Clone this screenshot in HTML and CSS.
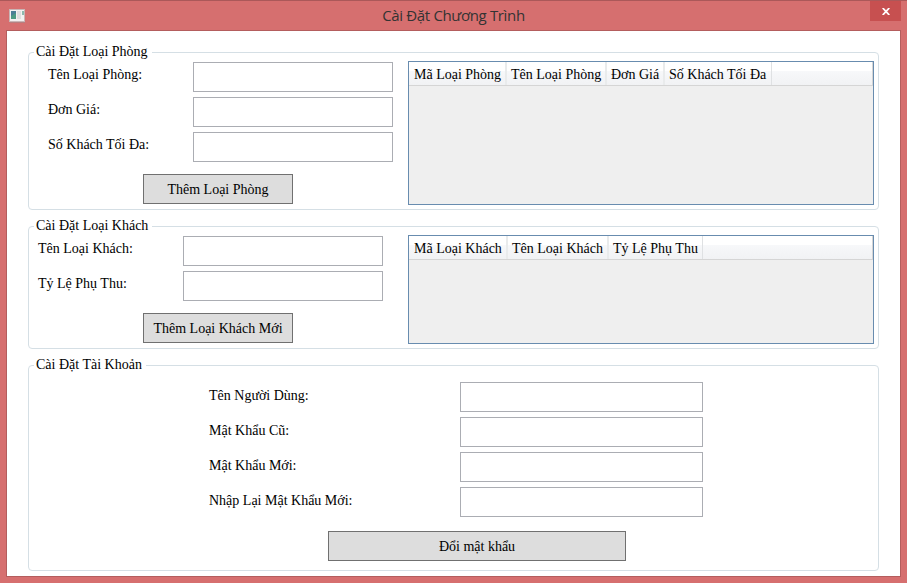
FILE: index.html
```html
<!DOCTYPE html>
<html lang="vi">
<head>
<meta charset="utf-8">
<title>Cài Đặt Chương Trình</title>
<link rel="stylesheet" href="styles.css">
</head>
<body>
<div class="window">
  <header class="titlebar">
    <svg class="app-icon" width="16" height="14" viewBox="0 0 16 14">
      <rect x=".5" y=".5" width="15" height="12" fill="#f3f1f1" stroke="#c9b5b5"/>
      <rect x="2" y="2" width="5" height="8" fill="#4b7f96"/>
      <path d="M2 10V7l5-3v6z" fill="#4d9b83"/>
      <rect x="8" y="2" width="4" height="8" fill="#dedede"/>
      <rect x="13" y="2" width="2" height="4" fill="#8db9ae"/>
      <path d="M1 13.5h15" stroke="#b77f80"/>
    </svg>
    <h1 class="title">Cài Đặt Chương Trình</h1>
    <button class="close" aria-label="Đóng">
      <svg width="8" height="7" viewBox="0 0 8 7"><path d="M.7 0 7.3 7M7.3 0 .7 7" stroke="#fff" stroke-width="1.8"/></svg>
    </button>
  </header>
  <main class="client">
    <fieldset class="group room">
      <legend>Cài Đặt Loại Phòng</legend>
      <div class="form">
        <div class="fields">
          <label for="r1">Tên Loại Phòng:</label><input id="r1">
          <label for="r2">Đơn Giá:</label><input id="r2">
          <label for="r3">Số Khách Tối Đa:</label><input id="r3">
        </div>
        <button class="btn">Thêm Loại Phòng</button>
      </div>
      <div class="list">
        <div class="head"><span class="c1">Mã Loại Phòng</span><span class="c2">Tên Loại Phòng</span><span class="c3">Đơn Giá</span><span class="c4">Số Khách Tối Đa</span></div>
      </div>
    </fieldset>
    <fieldset class="group guest">
      <legend>Cài Đặt Loại Khách</legend>
      <div class="form">
        <div class="fields">
          <label for="g1">Tên Loại Khách:</label><input id="g1">
          <label for="g2">Tỷ Lệ Phụ Thu:</label><input id="g2">
        </div>
        <button class="btn">Thêm Loại Khách Mới</button>
      </div>
      <div class="list">
        <div class="head"><span class="c1">Mã Loại Khách</span><span class="c2">Tên Loại Khách</span><span class="c3">Tỷ Lệ Phụ Thu</span></div>
      </div>
    </fieldset>
    <fieldset class="group account">
      <legend>Cài Đặt Tài Khoản</legend>
      <div class="form">
        <div class="fields">
          <label for="a1">Tên Người Dùng:</label><input id="a1">
          <label for="a2">Mật Khẩu Cũ:</label><input id="a2" type="password">
          <label for="a3">Mật Khẩu Mới:</label><input id="a3" type="password">
          <label for="a4">Nhập Lại Mật Khẩu Mới:</label><input id="a4" type="password">
        </div>
        <button class="btn">Đổi mật khẩu</button>
      </div>
    </fieldset>
  </main>
</div>
</body>
</html>
```
FILE: styles.css
```css
* { box-sizing: border-box; }
body { margin: 0; overflow: hidden; }
.window {
  width: 907px;
  height: 583px;
  padding: 0 6px 6px;
  background: #d66f6f;
  border-top: 1px solid #ab5859;
  font: 14px/17px "Liberation Serif", serif;
  color: #000;
}
.titlebar {
  display: flex;
  height: 29px;
  justify-content: space-between;
}
.app-icon { margin: 8px 0 0 3px; }
.title {
  margin: 3px 0 0 12px;
  font: 15px/22px "Open Sans", sans-serif;
  letter-spacing: -0.35px;
  color: #333;
}
.close {
  width: 31px;
  height: 20px;
  padding: 0;
  border: 0;
  background: #c75050;
  line-height: 0;
}
.client {
  width: 895px;
  height: 547px;
  padding: 13px 21px 0;
  border: 1px solid #b45d5d;
  background: #fff;
}
.group {
  display: flex;
  width: 851px;
  margin: 0;
  padding: 0;
  border: 1px solid #d5dfe5;
  border-radius: 4px;
}
.room { height: 166px; margin-bottom: 8px; }
.guest { height: 131px; margin-bottom: 8px; }
.account { height: 214px; }
legend { margin-left: 5px; padding: 0 4px 0 2px; height: 17px; line-height: 15px; }
.form { width: 379px; padding-top: 1px; flex: none; }
.fields { display: grid; grid-auto-rows: 30px; row-gap: 5px; }
.fields label { padding-top: 4px; }
.fields input {
  width: 100%;
  height: 30px;
  border: 1px solid #abadb3;
  background: #fff;
  padding: 4px;
  font: inherit;
}
.btn {
  display: block;
  width: 150px;
  height: 30px;
  padding: 0;
  border: 1px solid #707070;
  background: #ddd;
  font: inherit;
  color: #000;
}
.room .fields { grid-template-columns: 145px 200px; margin-left: 19px; }
.guest .fields { grid-template-columns: 145px 200px; margin-left: 9px; }
.room .btn, .guest .btn { margin: 12px 0 0 114px; }
.list { width: 466px; border: 1px solid #688caf; background: #efefef; }
.room .list { height: 144px; }
.guest .list { height: 109px; }
.head {
  display: flex;
  height: 24px;
  border: solid #d5d5d5;
  border-width: 0 1px 1px 0;
  background: linear-gradient(#fff 0 40%, #f7f8fa 41%, #f1f2f4);
}
.head span {
  height: 23px;
  padding: 4px 0 0 4px;
  border-right: 2px solid #e9ebec;
  white-space: nowrap;
}
.head .c1 { padding-left: 5px; }
.head span:last-child { border-right: 1px solid #dfe1e3; }
.room .c1 { width: 98px; }
.room .c2 { width: 100px; }
.room .c3 { width: 58px; }
.room .c4 { width: 107px; }
.guest .c1 { width: 99px; }
.guest .c2 { width: 101px; }
.guest .c3 { width: 94px; }
.account .form { width: 100%; padding-top: 8px; }
.account .fields { grid-template-columns: 251px 243px; margin-left: 180px; }
.account .fields label { padding-top: 5px; }
.account .btn { width: 298px; margin: 14px 0 0 299px; }
```
